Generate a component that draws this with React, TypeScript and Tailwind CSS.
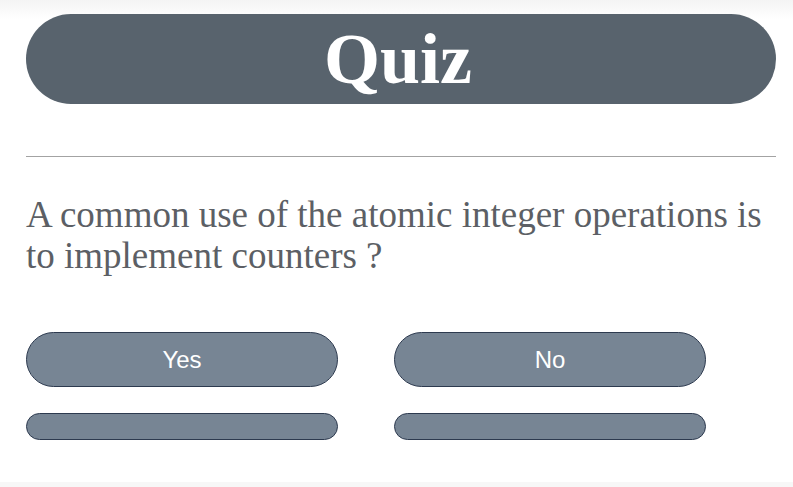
export default function App() {
  return (
    <div className="flex h-[487px] w-[793px] flex-col overflow-hidden bg-gradient-to-b from-[#f4f4f4] via-white via-[4%] to-white">
      <div className="flex-1 pl-[26px] pr-[17px] pt-[14px]">
        <div className="flex h-[90px] items-center justify-center rounded-full bg-[#58636d]">
          <h1 className="-ml-[6px] font-['Liberation_Serif',serif] text-[72px] font-bold leading-none text-white">Quiz</h1>
        </div>
        <hr className="mt-[52px] border-t border-[#a3a3a3]" />
        <p className="mt-[37px] font-['Liberation_Serif',serif] text-[37px] leading-[41px] text-[#5c5f65]">
          A common use of the atomic integer operations is to implement counters ?
        </p>
        <div className="mt-[56px] grid w-[680px] grid-cols-2 gap-x-[56px] gap-y-[26px]">
          <button className="h-[55px] rounded-full border border-[#2d3a4f] bg-[#778594] font-['Liberation_Sans',sans-serif] text-[24px] text-white">
            Yes
          </button>
          <button className="h-[55px] rounded-full border border-[#2d3a4f] bg-[#778594] font-['Liberation_Sans',sans-serif] text-[24px] text-white">
            No
          </button>
          <button className="h-[27px] rounded-full border border-[#2d3a4f] bg-[#778594]" />
          <button className="h-[27px] rounded-full border border-[#2d3a4f] bg-[#778594]" />
        </div>
      </div>
      <div className="h-[5px] bg-[#f7f7f7]" />
    </div>
  );
}
